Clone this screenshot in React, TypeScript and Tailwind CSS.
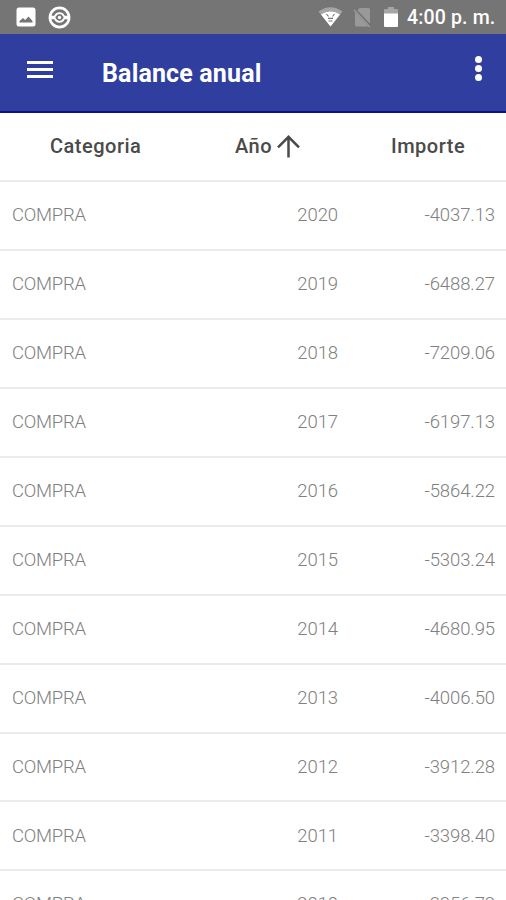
const rows = [
  { category: "COMPRA", year: 2020, amount: "-4037.13" },
  { category: "COMPRA", year: 2019, amount: "-6488.27" },
  { category: "COMPRA", year: 2018, amount: "-7209.06" },
  { category: "COMPRA", year: 2017, amount: "-6197.13" },
  { category: "COMPRA", year: 2016, amount: "-5864.22" },
  { category: "COMPRA", year: 2015, amount: "-5303.24" },
  { category: "COMPRA", year: 2014, amount: "-4680.95" },
  { category: "COMPRA", year: 2013, amount: "-4006.50" },
  { category: "COMPRA", year: 2012, amount: "-3912.28" },
  { category: "COMPRA", year: 2011, amount: "-3398.40" },
  { category: "COMPRA", year: 2010, amount: "-3356.72" },
];

const StatusBar = () => {
  return (
    <div className="flex h-[34px] shrink-0 items-center bg-[#757575] pl-4 pr-[11px] text-white">
      <svg className="h-5 w-5" viewBox="0 0 20 20">
        <rect x="0.5" y="0.5" width="19" height="19" rx="2.5" fill="#fff" />
        <path d="M3.500 15.500v-1.500L7 11l2.200 2 3.300-3.500 4 4.500v1.500Z" fill="#757575" />
      </svg>
      <svg className="ml-3 h-[23px] w-[23px]" viewBox="0 0 23 23" fill="none" stroke="#fff">
        <circle cx="11.5" cy="11.5" r="9.6" strokeWidth="2.6" />
        <path d="M2 11.500h5.500M15.500 11.500H21" strokeWidth="3.600" />
        <path d="M7 10.500a4.700 4.700 0 0 1 9 0M7 12.500a4.700 4.700 0 0 0 9 0" strokeWidth="1.800" />
        <circle cx="11.5" cy="11.5" r="1.7" fill="#fff" stroke="none" />
      </svg>

      <div className="ml-auto flex items-center">
        <svg className="h-5 w-[25px]" viewBox="0 0 25 20">
          <path d="M0.500 4.500Q12.500-4 24.500 4.500L12.500 19.500Z" fill="#a5a5a5" />
          <path d="M3 7.500Q12.500 1.500 22 7.500L12.500 19.500Z" fill="#fff" />
          <path d="M8.500 7l2 2.500M16.500 7l-2 2.500M10 11.300h5M10.500 14h4" stroke="#757575" strokeWidth="1.200" fill="none" />
        </svg>
        <svg className="ml-2.5 h-[21px] w-[19px]" viewBox="0 0 19 21">
          <path d="M6.500 1h9q1.500 0 1.500 1.500V17L4.200 3.500ZM2 5 15.500 19.500H3.500Q2 19.500 2 18Z" fill="#999" />
          <path d="M1.500 1.500 18 19" stroke="#707070" strokeWidth="1.400" />
          <path d="M1 2.800 17 20" stroke="#999" strokeWidth="1.500" />
        </svg>
        <svg className="ml-[11px] h-[22px] w-4" viewBox="0 0 16 22">
          <path d="M1 8V4q0-1 1-1h3V1h6v2h3q1 0 1 1v4Z" fill="#a5a5a5" />
          <path d="M1 7.500h14V20q0 1-1 1H2q-1 0-1-1Z" fill="#fff" />
        </svg>
        <span className="ml-2 w-[88px] whitespace-nowrap pt-0.5 text-[19.500px] font-medium leading-6 tracking-[0.15px]">
          4:00 p. m.
        </span>
      </div>
    </div>
  );
};

const AppBar = () => {
  return (
    <header className="flex h-[79px] shrink-0 items-center border-b-2 border-[#08108a] bg-[#303f9f] pl-[27px] pr-6 text-white">
      <button className="flex flex-col gap-1 pb-1.5" aria-label="Menu">
        <span className="h-[3px] w-[26px] bg-white" />
        <span className="h-[3px] w-[26px] bg-white" />
        <span className="h-[3px] w-[26px] bg-white" />
      </button>
      <h1 className="ml-[49px] pt-0.5 text-[25px] font-bold leading-8 tracking-[0.15px]">Balance anual</h1>
      <button className="ml-auto flex flex-col gap-[2px] pb-2" aria-label="Opciones">
        <span className="h-[7px] w-[7px] rounded-full bg-white" />
        <span className="h-[7px] w-[7px] rounded-full bg-white" />
        <span className="h-[7px] w-[7px] rounded-full bg-white" />
      </button>
    </header>
  );
};

const App = () => {
  return (
    <div className="flex h-[900px] w-[506px] flex-col overflow-hidden bg-white font-['Roboto',sans-serif]">
      <StatusBar />
      <AppBar />
      <div className="flex h-[69px] shrink-0 items-center border-b-2 border-[#ebebeb] pb-px text-[20px] font-medium tracking-[0.5px] text-[#4a4a4a]">
        <span className="w-[235px] pl-[50px]">Categoria</span>
        <span className="flex w-[156px] items-center gap-[5px]">
          Año
          <svg className="h-[23px] w-[23px]" viewBox="0 0 23 23" fill="none" stroke="#4a4a4a" strokeWidth="2.500">
            <path d="M11.500 22.500V2M1 12.300 11.500 1.800 22 12.300" />
          </svg>
        </span>
        <span>Importe</span>
      </div>
      {rows.map((row) => (
        <div
          key={row.year}
          className="flex h-[68.950px] shrink-0 items-center border-b-2 border-[#ebebeb] pl-3 pr-[11px] pt-px text-[18.500px] font-light tracking-[-0.1px] text-[#808080]"
        >
          <span className="w-[200px] tracking-[-0.25px]">{row.category}</span>
          <span className="w-[126px] text-right">{row.year}</span>
          <span className="ml-auto">{row.amount}</span>
        </div>
      ))}
    </div>
  );
};

export default App;
